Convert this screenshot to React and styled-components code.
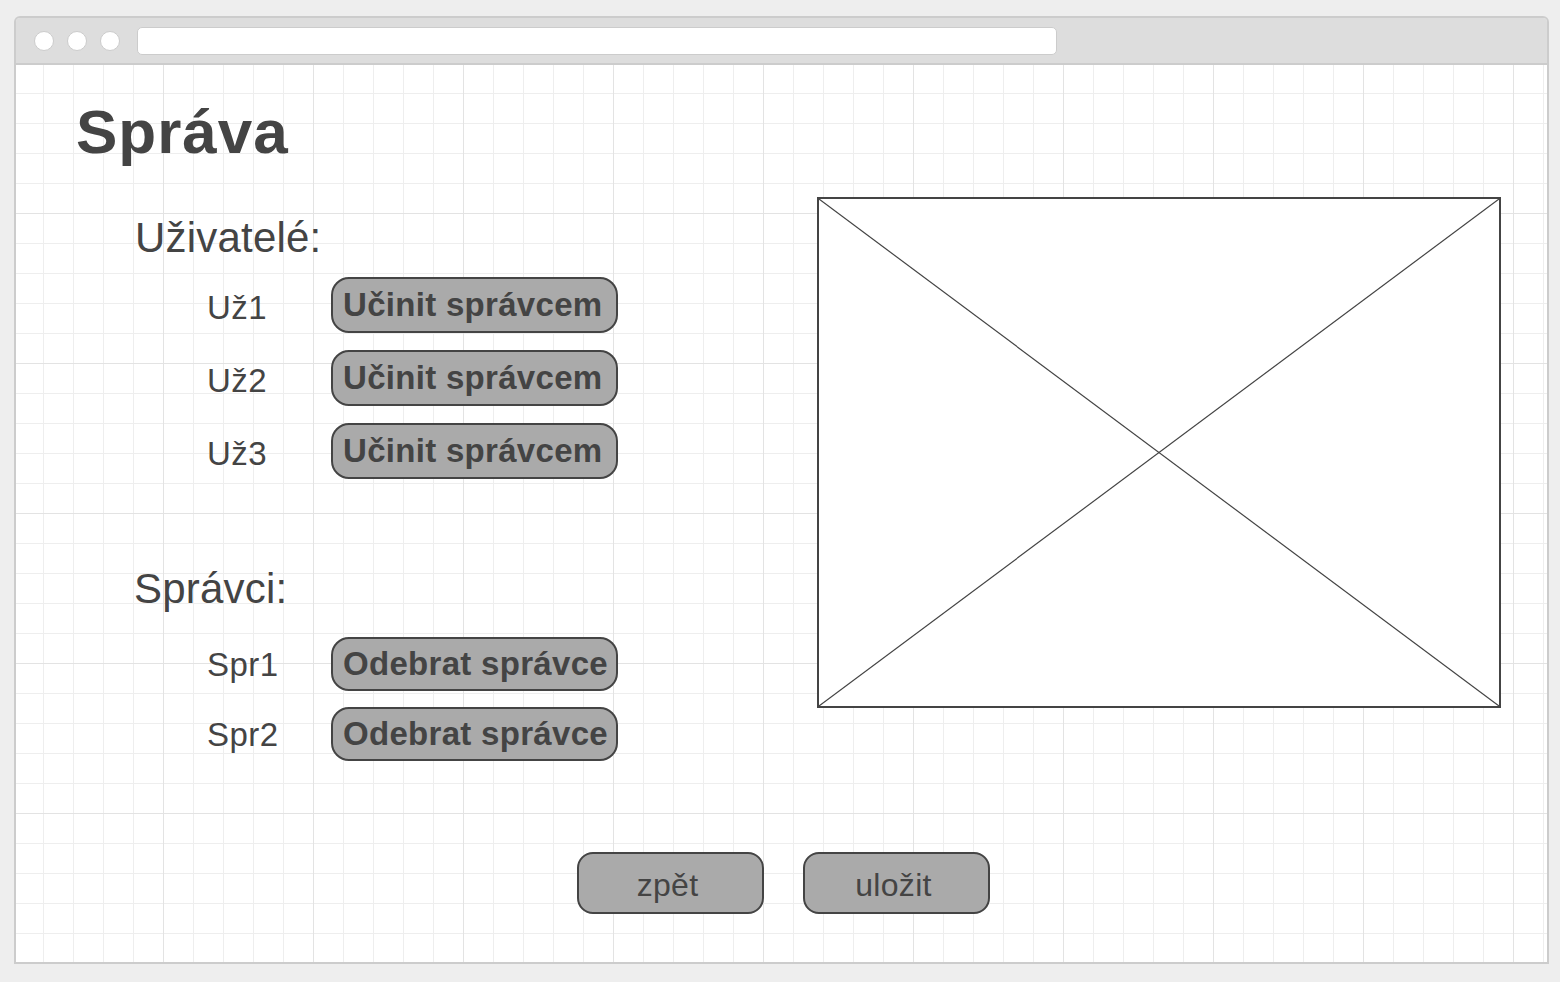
import React from "react";
import styled, { createGlobalStyle } from "styled-components";

// ********************** STYLED COMPONENTS ***************************************
const GlobalStyle = createGlobalStyle`
  html, body {
    margin: 0;
    padding: 0;
    background: #eeeeee;
  }
  body {
    font-family: "Liberation Sans", Arial, sans-serif;
    color: #444444;
  }
`;

const Page = styled.div`
  padding: 16px 0 0 14px;
  height: 982px;
  box-sizing: border-box;
`;

const Window = styled.div`
  width: 1535px;
  height: 948px;
  box-sizing: border-box;
  border: 2px solid #cccccc;
  border-radius: 6px 6px 0 0;
  display: flex;
  flex-direction: column;
  overflow: hidden;
`;

const TitleBar = styled.div`
  height: 45px;
  flex: none;
  background: #dddddd;
  border-bottom: 2px solid #cccccc;
  display: flex;
  align-items: center;
  padding-left: 18px;
  gap: 13px;
`;

const Dot = styled.span`
  width: 20px;
  height: 20px;
  box-sizing: border-box;
  border-radius: 50%;
  background: #ffffff;
  border: 1px solid #cccccc;
  flex: none;
`;

const AddressBar = styled.div`
  width: 920px;
  height: 28px;
  box-sizing: border-box;
  margin-left: 4px;
  background: #ffffff;
  border: 1px solid #cccccc;
  border-radius: 5px;
`;

const Canvas = styled.div`
  flex: 1;
  padding-top: 37px;
  background-color: #ffffff;
  background-image:
    linear-gradient(to right, #e3e3e3 0 1px, transparent 1px),
    linear-gradient(to bottom, #e3e3e3 0 1px, transparent 1px),
    linear-gradient(to right, #eeeeee 0 1px, transparent 1px),
    linear-gradient(to bottom, #eeeeee 0 1px, transparent 1px);
  background-size: 150px 150px, 150px 150px, 30px 30px, 30px 30px;
  background-position: 147px 148px, 147px 148px, 27px 28px, 27px 28px;
`;

const Title = styled.h1`
  margin: 0 0 0 60px;
  font-size: 62px;
  line-height: 60px;
  letter-spacing: 1px;
  font-weight: 700;
  color: #444444;
`;

const Main = styled.div`
  display: flex;
  align-items: flex-start;
  margin-top: 35px;
  padding-left: 118px;
`;

const LeftColumn = styled.div`
  width: 683px;
  padding-top: 17px;
  display: flex;
  flex-direction: column;
`;

const SectionTitle = styled.h2`
  margin: ${(p) => p.$top || 0}px 0 0 ${(p) => p.$left || 0}px;
  font-size: 42px;
  line-height: 48px;
  letter-spacing: 0.2px;
  font-weight: 400;
  color: #444444;
`;

const List = styled.div`
  display: flex;
  flex-direction: column;
  gap: ${(p) => p.$gap}px;
  margin-top: ${(p) => p.$top}px;
`;

const Row = styled.div`
  display: flex;
  align-items: center;
`;

const Label = styled.span`
  margin-left: 73px;
  width: 124px;
  padding-top: ${(p) => p.$dy || 0}px;
  font-size: 33px;
  line-height: 33px;
  letter-spacing: 0.5px;
  color: #444444;
`;

const ActionButton = styled.button`
  width: 287px;
  height: ${(p) => p.$h}px;
  box-sizing: border-box;
  padding: 0 0 0 10px;
  border: 2px solid #444444;
  border-radius: 18px;
  background: #aaaaaa;
  color: #444444;
  font-family: "Liberation Sans", Arial, sans-serif;
  font-weight: 700;
  font-size: 33px;
  letter-spacing: 0.3px;
  line-height: ${(p) => p.$h - 4}px;
  text-align: left;
  white-space: nowrap;
  overflow: visible;
`;

const Placeholder = styled.div`
  width: 684px;
  height: 511px;
  box-sizing: border-box;
  border: 2px solid #444444;
  background: #ffffff;
  flex: none;

  svg {
    display: block;
    width: 100%;
    height: 100%;
  }
`;

const Footer = styled.div`
  display: flex;
  justify-content: center;
  align-items: center;
  gap: 39px;
  margin-top: 91px;
  padding-left: 3px;
`;

const NavButton = styled.button`
  width: 187px;
  height: 62px;
  box-sizing: border-box;
  border: 2px solid #444444;
  border-radius: 16px;
  background: #aaaaaa;
  color: #444444;
  font-family: "Liberation Sans", Arial, sans-serif;
  font-size: 32px;
  letter-spacing: 0.3px;
  line-height: 58px;
  padding: 2px 5px 0 0;
`;
// ********************** STYLED COMPONENTS END ***********************************

const users = ["Už1", "Už2", "Už3"];
const admins = ["Spr1", "Spr2"];

const App = () => {
  return (
    <Page>
      <GlobalStyle />
      <Window>
        <TitleBar>
          <Dot />
          <Dot />
          <Dot />
          <AddressBar />
        </TitleBar>

        <Canvas>
          <Title>Správa</Title>

          <Main>
            <LeftColumn>
              <SectionTitle $left={1}>Uživatelé:</SectionTitle>
              <List $gap={17} $top={15}>
                {users.map((u) => (
                  <Row key={u}>
                    <Label $dy={4}>{u}</Label>
                    <ActionButton $h={56}>Učinit správcem</ActionButton>
                  </Row>
                ))}
              </List>

              <SectionTitle $top={86}>Správci:</SectionTitle>
              <List $gap={16} $top={24}>
                {admins.map((a) => (
                  <Row key={a}>
                    <Label>{a}</Label>
                    <ActionButton $h={54}>Odebrat správce</ActionButton>
                  </Row>
                ))}
              </List>
            </LeftColumn>

            {/* image placeholder */}
            <Placeholder>
              <svg viewBox="0 0 100 100" preserveAspectRatio="none">
                <line x1="0" y1="0" x2="100" y2="100" stroke="#444" strokeWidth="1.2" vectorEffect="non-scaling-stroke" />
                <line x1="100" y1="0" x2="0" y2="100" stroke="#444" strokeWidth="1.2" vectorEffect="non-scaling-stroke" />
              </svg>
            </Placeholder>
          </Main>

          <Footer>
            <NavButton>zpět</NavButton>
            <NavButton>uložit</NavButton>
          </Footer>
        </Canvas>
      </Window>
    </Page>
  );
};

export default App;
